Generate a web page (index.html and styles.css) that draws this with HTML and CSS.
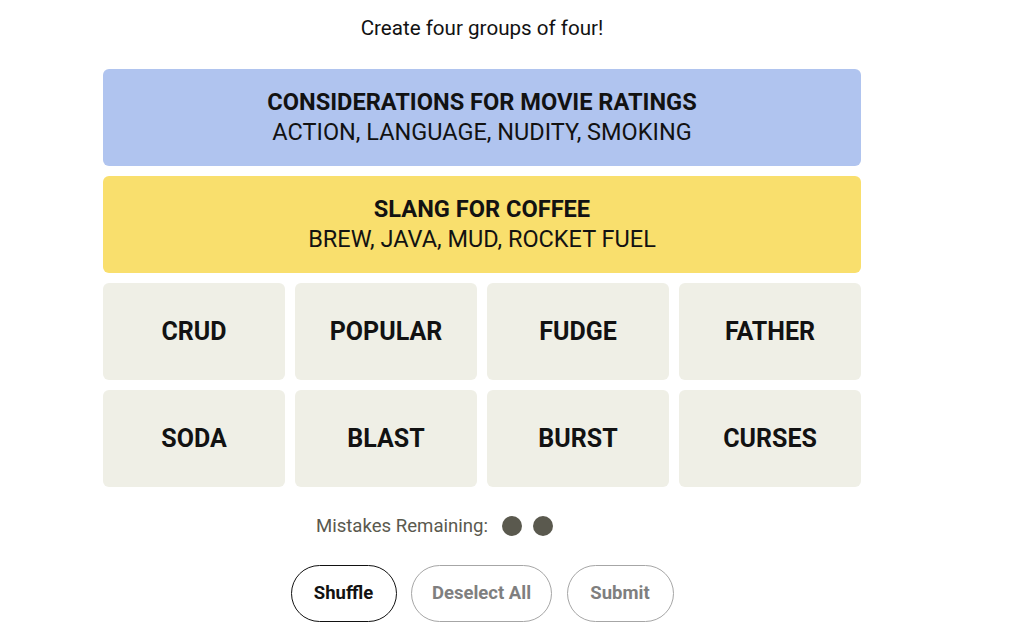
FILE: index.html
```html
<!DOCTYPE html>
<html lang="en">
<head>
<meta charset="utf-8">
<title>Connections</title>
<link rel="stylesheet" href="styles.css">
</head>
<body>
<main class="game">
  <p class="prompt">Create four groups of four!</p>
  <section class="board">
    <div class="solved solved-blue">
      <h3 class="solved-title">CONSIDERATIONS FOR MOVIE RATINGS</h3>
      <p class="solved-words">ACTION, LANGUAGE, NUDITY, SMOKING</p>
    </div>
    <div class="solved solved-yellow">
      <h3 class="solved-title">SLANG FOR COFFEE</h3>
      <p class="solved-words">BREW, JAVA, MUD, ROCKET FUEL</p>
    </div>
    <div class="tiles">
      <button class="tile">CRUD</button>
      <button class="tile">POPULAR</button>
      <button class="tile">FUDGE</button>
      <button class="tile">FATHER</button>
      <button class="tile">SODA</button>
      <button class="tile">BLAST</button>
      <button class="tile">BURST</button>
      <button class="tile">CURSES</button>
    </div>
  </section>
  <div class="mistakes">
    <span class="mistakes-label">Mistakes Remaining:</span>
    <span class="dots">
      <span class="dot"></span>
      <span class="dot"></span>
      <span class="dot dot-used"></span>
      <span class="dot dot-used"></span>
    </span>
  </div>
  <div class="actions">
    <button class="pill pill-active">Shuffle</button>
    <button class="pill pill-disabled pill-wide">Deselect All</button>
    <button class="pill pill-disabled">Submit</button>
  </div>
</main>
</body>
</html>
```
FILE: styles.css
```css
* { box-sizing: border-box; }
html, body { margin: 0; padding: 0; background: #ffffff; }
body {
  font-family: Roboto, "Liberation Sans", sans-serif;
  color: #121212;
}
.game {
  width: 964px;
  display: flex;
  flex-direction: column;
  align-items: center;
}
.prompt {
  margin: 16px 0 0;
  font-size: 20.6px;
  line-height: 25px;
  color: #121212;
}
.board {
  width: 758px;
  margin-top: 28px;
  display: flex;
  flex-direction: column;
  gap: 10.5px;
}
.solved {
  height: 96.5px;
  border-radius: 6px;
  display: flex;
  flex-direction: column;
  align-items: center;
  justify-content: center;
}
.solved-blue { background: #b0c4ef; }
.solved-yellow { background: #f9df6d; }
.solved-title {
  margin: 0;
  font-weight: 700;
  font-size: 23.6px;
  line-height: 30px;
}
.solved-words {
  margin: 0;
  font-size: 23.5px;
  line-height: 30px;
}
.tiles {
  display: grid;
  grid-template-columns: repeat(4, 1fr);
  gap: 10.5px 10px;
}
.tile {
  height: 96.5px;
  border: none;
  border-radius: 6px;
  background: #efefe6;
  font-family: Roboto, "Liberation Sans", sans-serif;
  font-weight: 700;
  font-size: 25px;
  color: #121212;
  padding: 0;
}
.mistakes {
  margin-top: 28px;
  display: flex;
  align-items: center;
  margin-right: 33px;
  gap: 14px;
}
.mistakes-label {
  font-size: 18.6px;
  line-height: 22px;
  color: #5a594e;
}
.dots { display: flex; gap: 11px; }
.dot {
  width: 20px;
  height: 20px;
  border-radius: 50%;
  background: #5a594e;
}
.dot-used { visibility: hidden; }
.actions {
  margin-top: 28px;
  display: flex;
  gap: 14.5px;
}
.pill {
  height: 57px;
  width: 107px;
  border-radius: 29px;
  background: #ffffff;
  font-family: Roboto, "Liberation Sans", sans-serif;
  font-weight: 700;
  font-size: 18.5px;
  padding: 0;
}
.pill-active { width: 106px; }
.pill-wide { width: 141px; }
.pill-active { border: 1px solid #121212; color: #121212; }
.pill-disabled { border: 1px solid #a6a6a6; color: #7f7f7f; }
```
